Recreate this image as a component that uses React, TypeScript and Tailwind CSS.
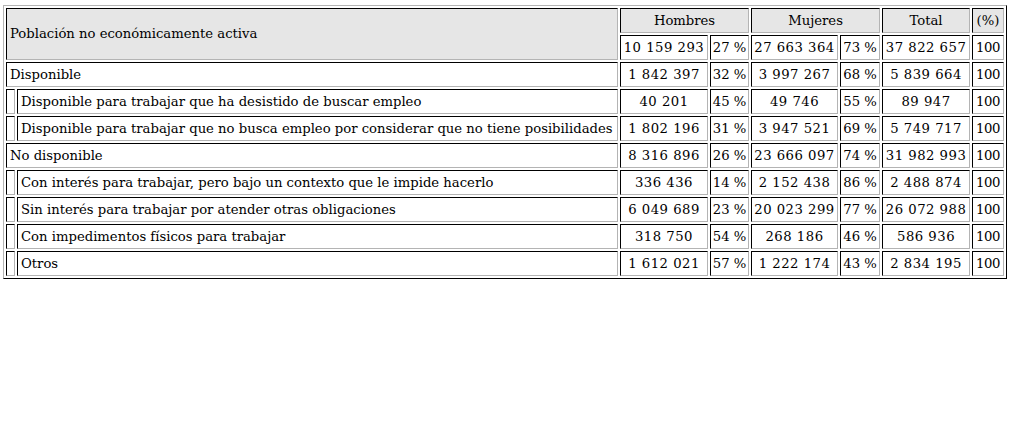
type Row = {
  label: string;
  indent: boolean;
  h: string;
  hp: string;
  m: string;
  mp: string;
  t: string;
};

const ROWS: Row[] = [
  { label: "Disponible", indent: false, h: "1 842 397", hp: "32 %", m: "3 997 267", mp: "68 %", t: "5 839 664" },
  { label: "Disponible para trabajar que ha desistido de buscar empleo", indent: true, h: "40 201", hp: "45 %", m: "49 746", mp: "55 %", t: "89 947" },
  { label: "Disponible para trabajar que no busca empleo por considerar que no tiene posibilidades", indent: true, h: "1 802 196", hp: "31 %", m: "3 947 521", mp: "69 %", t: "5 749 717" },
  { label: "No disponible", indent: false, h: "8 316 896", hp: "26 %", m: "23 666 097", mp: "74 %", t: "31 982 993" },
  { label: "Con interés para trabajar, pero bajo un contexto que le impide hacerlo", indent: true, h: "336 436", hp: "14 %", m: "2 152 438", mp: "86 %", t: "2 488 874" },
  { label: "Sin interés para trabajar por atender otras obligaciones", indent: true, h: "6 049 689", hp: "23 %", m: "20 023 299", mp: "77 %", t: "26 072 988" },
  { label: "Con impedimentos físicos para trabajar", indent: true, h: "318 750", hp: "54 %", m: "268 186", mp: "46 %", t: "586 936" },
  { label: "Otros", indent: true, h: "1 612 021", hp: "57 %", m: "1 222 174", mp: "43 %", t: "2 834 195" },
];

// inset cell border: dark top/left, light bottom/right
const CELL =
  "h-[25px] p-0 border border-t-black border-l-black border-r-[#b4b4b4] border-b-[#b4b4b4] whitespace-nowrap";
const NUM = `${CELL} px-[1px] text-center tracking-[0.5px]`;
const PCT = `${CELL} px-[1px] text-center`;
const HUNDRED = `${CELL} px-0 text-center tracking-[-0.3px]`;
const HEAD = `${CELL} bg-[#e6e6e6] text-center`;

export default function App() {
  return (
    <div className="bg-white min-h-screen pt-[5px] font-['DejaVu_Serif',serif] text-[13.2px] text-black">
      <table className="ml-[3px] w-[1004px] table-fixed border-separate border-spacing-[2px] border border-t-[#b4b4b4] border-l-[#b4b4b4] border-r-black border-b-black">
        <colgroup>
          <col className="w-[9px]" />
          <col className="w-[601px]" />
          <col className="w-[88px]" />
          <col className="w-[39px]" />
          <col className="w-[87px]" />
          <col className="w-[40px]" />
          <col className="w-[88px]" />
          <col className="w-[32px]" />
        </colgroup>
        <tbody>
          <tr>
            <td colSpan={2} rowSpan={2} className={`${CELL} bg-[#e6e6e6] text-left pl-[3px]`}>
              Población no económicamente activa
            </td>
            <td colSpan={2} className={HEAD}>Hombres</td>
            <td colSpan={2} className={HEAD}>Mujeres</td>
            <td className={HEAD}>Total</td>
            <td className={HEAD}>(%)</td>
          </tr>
          <tr>
            <td className={NUM}>10 159 293</td>
            <td className={PCT}>27 %</td>
            <td className={NUM}>27 663 364</td>
            <td className={PCT}>73 %</td>
            <td className={NUM}>37 822 657</td>
            <td className={HUNDRED}>100</td>
          </tr>
          {ROWS.map((r) => (
            <tr key={r.label}>
              {r.indent && <td className={CELL}></td>}
              <td colSpan={r.indent ? 1 : 2} className={`${CELL} text-left pl-[3px]`}>
                {r.label}
              </td>
              <td className={NUM}>{r.h}</td>
              <td className={PCT}>{r.hp}</td>
              <td className={NUM}>{r.m}</td>
              <td className={PCT}>{r.mp}</td>
              <td className={NUM}>{r.t}</td>
              <td className={HUNDRED}>100</td>
            </tr>
          ))}
        </tbody>
      </table>
    </div>
  );
}
